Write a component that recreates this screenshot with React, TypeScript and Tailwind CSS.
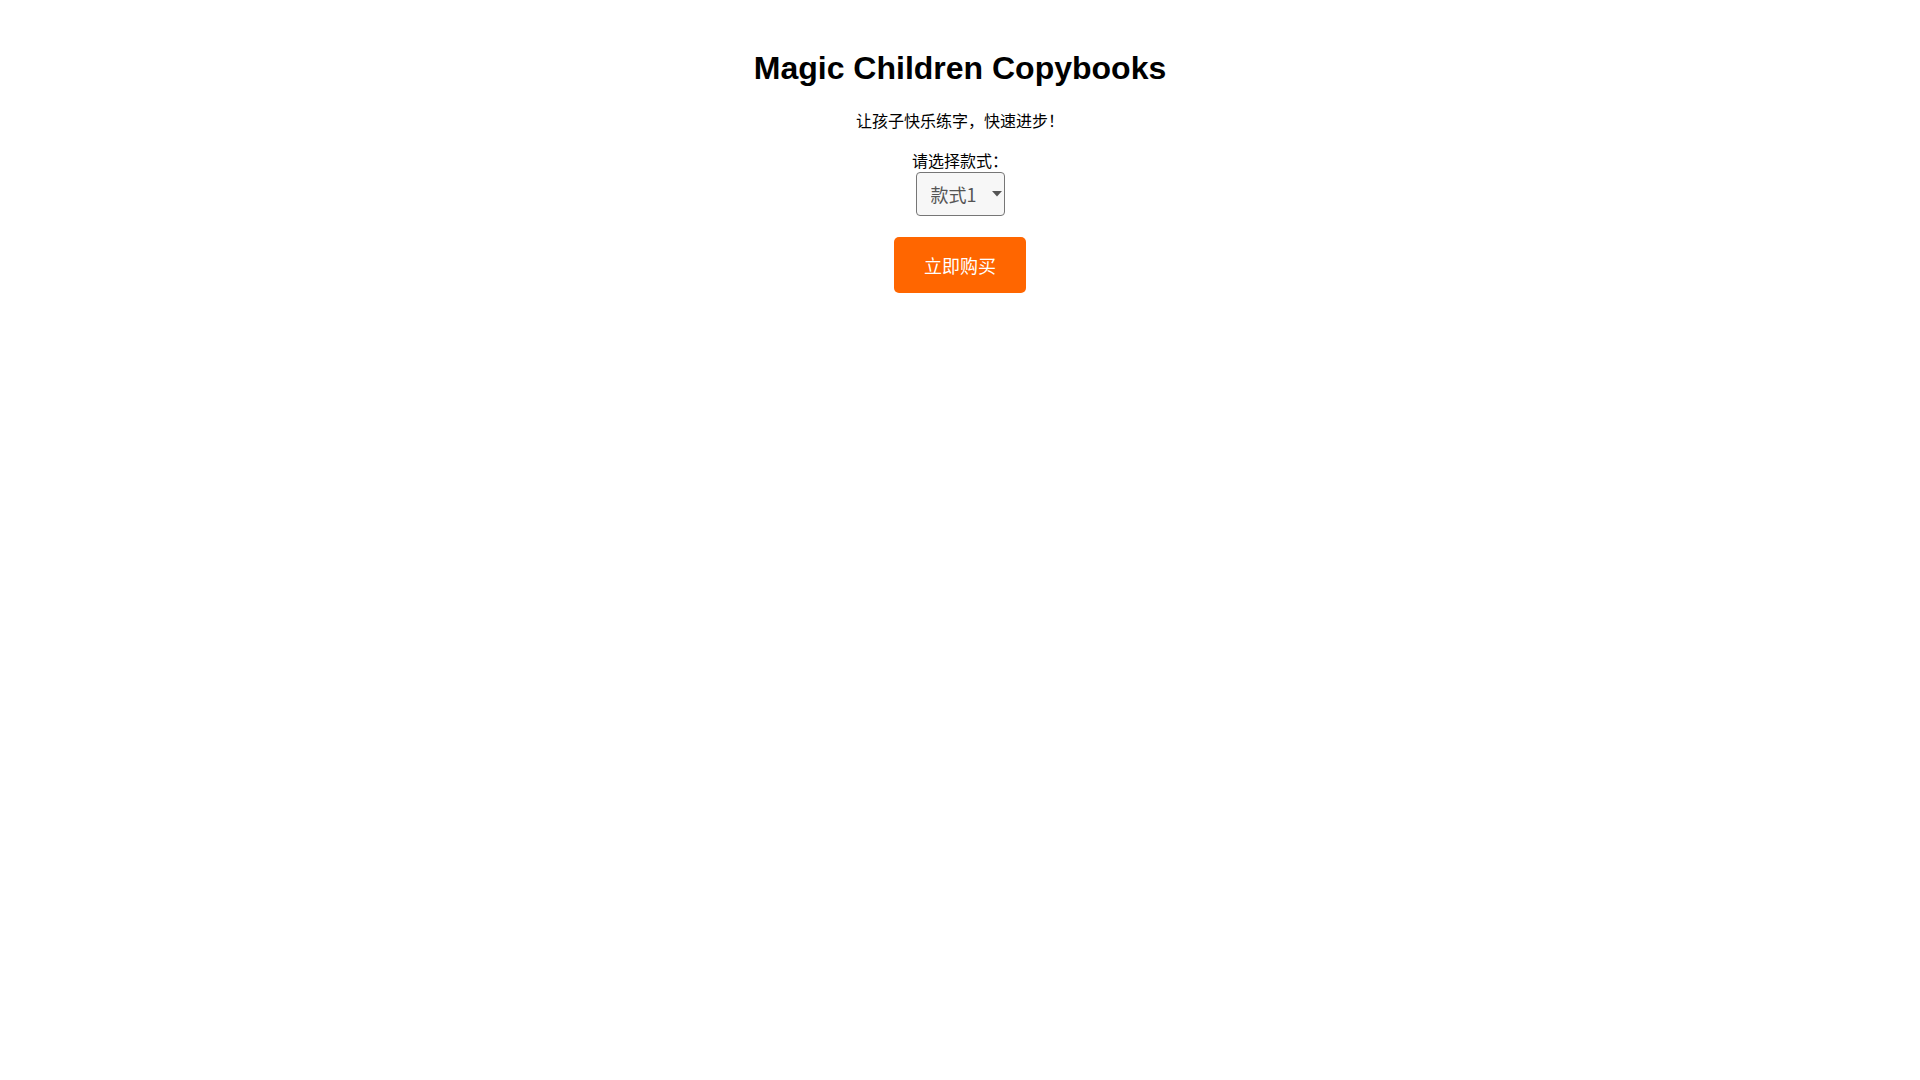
import { useState } from "react";

// 款式选项
const styles = ["款式1", "款式2", "款式3"];

export default function App() {
  const [style, setStyle] = useState(styles[0]);

  return (
    <div className="min-h-screen bg-white text-black pt-[50px] text-center font-['Liberation_Sans','Noto_Sans_CJK_SC',sans-serif]">
      <h1 className="text-[32px] leading-[37px] font-bold">Magic Children Copybooks</h1>

      <p className="mt-[22px] text-[16px] leading-[23px] font-['Noto_Sans_CJK_SC',sans-serif]">
        让孩子快乐练字，快速进步！
      </p>

      <div className="mt-[17px] flex flex-col items-center font-['Noto_Sans_CJK_SC',sans-serif]">
        <label htmlFor="style" className="block text-[16px] leading-[22px]">
          请选择款式：
        </label>
        <div className="relative mt-[1px]">
          <select
            id="style"
            value={style}
            onChange={(e) => setStyle(e.target.value)}
            className="appearance-none block w-[89px] h-[44px] pl-[14px] pr-[20px] text-[18px] text-[#555] bg-[#f7f7f7] border border-[#767676] rounded-[4px] font-['Noto_Sans_CJK_SC',sans-serif]"
          >
            {styles.map((s) => (
              <option key={s} value={s}>
                {s}
              </option>
            ))}
          </select>
          {/* 下拉三角 */}
          <svg
            className="pointer-events-none absolute right-[3px] top-[19px] w-[10px] h-[6px]"
            viewBox="0 0 10 6"
          >
            <path d="M0 0h10L5 5.5z" fill="#555" />
          </svg>
        </div>
      </div>

      <button className="mt-[21px] w-[132px] h-[56px] bg-[#ff6600] text-white text-[18px] rounded-[5px] font-['Noto_Sans_CJK_SC',sans-serif]">
        立即购买
      </button>
    </div>
  );
}
